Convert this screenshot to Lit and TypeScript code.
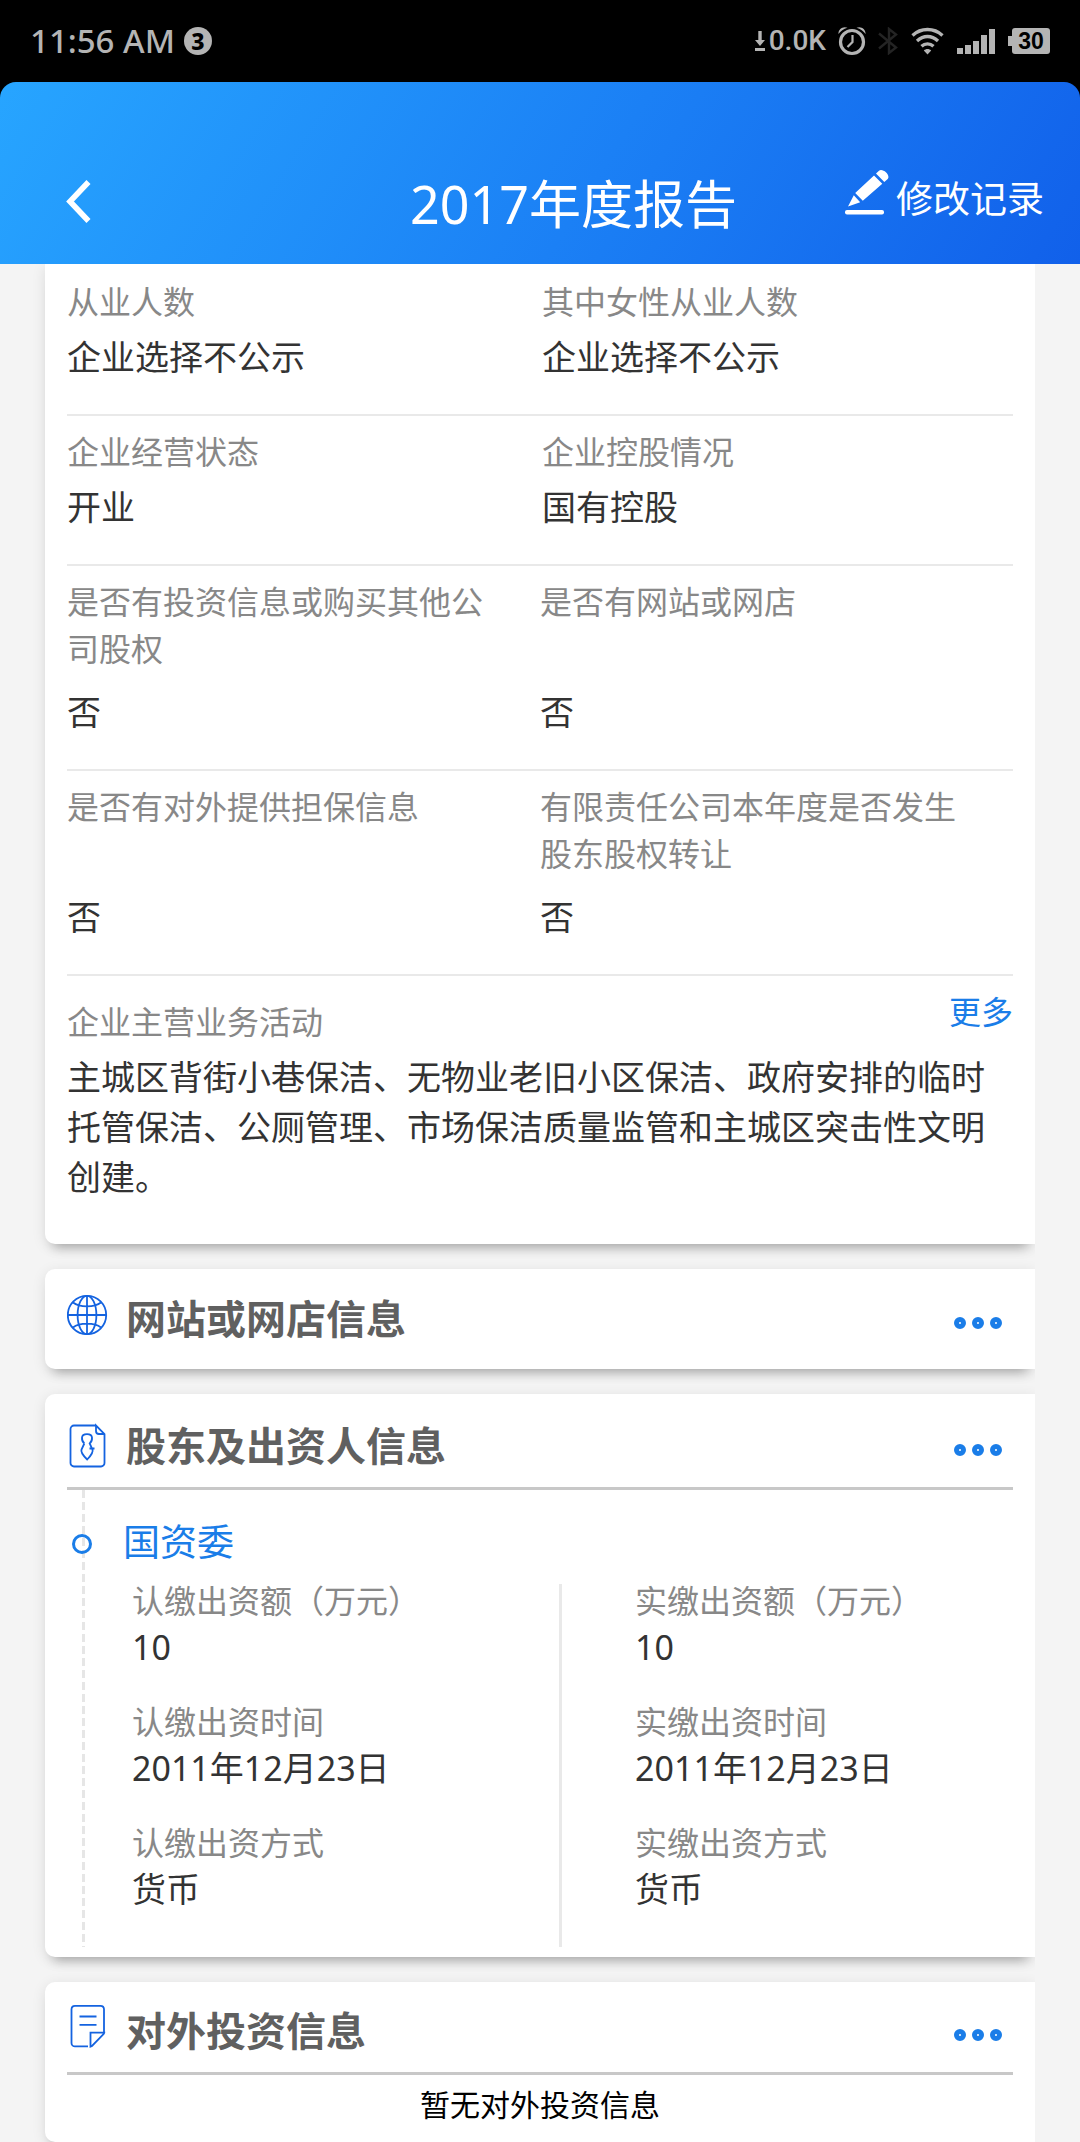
import { LitElement, html, css, svg, nothing, TemplateResult } from "lit";
import { customElement, property } from "lit/decorators.js";

interface Field {
  label: string;
  value: string;
}

const singleRows: Field[][] = [
  [
    { label: "从业人数", value: "企业选择不公示" },
    { label: "其中女性从业人数", value: "企业选择不公示" },
  ],
  [
    { label: "企业经营状态", value: "开业" },
    { label: "企业控股情况", value: "国有控股" },
  ],
];

const doubleRows: Field[][] = [
  [
    { label: "是否有投资信息或购买其他公司股权", value: "否" },
    { label: "是否有网站或网店", value: "否" },
  ],
  [
    { label: "是否有对外提供担保信息", value: "否" },
    { label: "有限责任公司本年度是否发生股东股权转让", value: "否" },
  ],
];

const subscribed: Field[] = [
  { label: "认缴出资额（万元）", value: "10" },
  { label: "认缴出资时间", value: "2011年12月23日" },
  { label: "认缴出资方式", value: "货币" },
];

const paidIn: Field[] = [
  { label: "实缴出资额（万元）", value: "10" },
  { label: "实缴出资时间", value: "2011年12月23日" },
  { label: "实缴出资方式", value: "货币" },
];

const icons: Record<string, TemplateResult> = {
  globe: svg`
    <circle cx="21" cy="22" r="19.200"/>
    <ellipse cx="21" cy="22" rx="9.400" ry="19.200"/>
    <path d="M21 2.800V41.200M1.800 22H40.200M7 9.500C13.500 14.600 28.500 14.600 35 9.500M7 34.500C13.500 29.400 28.500 29.400 35 34.500"/>`,
  holder: svg`
    <path d="M30 5.500H8A3.500 3.500 0 0 0 4.500 9V43A3.500 3.500 0 0 0 8 46.500H35A3.500 3.500 0 0 0 38.500 43V14L30 5.500V11A3 3 0 0 0 33 14H38.500"/>
    <path d="M18.300 23.500C16.200 21.500 15.800 19.500 16 17.500C16.300 12.900 25.700 12.900 26 17.500C26.200 19.500 25.800 21.500 23.700 23.500L26.500 29.500C27.500 32 26 34.500 21.200 39.500C16 34.500 14.500 32 15.500 29.500L18.300 23.500M23.500 28.500H28.500"/>`,
  note: svg`
    <path d="M22 41.400H9A3.500 3.500 0 0 1 5.500 37.900V4.300A3.500 3.500 0 0 1 9 0.900H34.500A3.500 3.500 0 0 1 38 4.300V27.700"/>
    <path d="M24.500 41.700V27.700H38.200Q38 28.700 37 29.700L26 41ZM13.500 11.500H30.500M13.500 19.800H30.500"/>`,
};

@customElement("status-bar")
export class StatusBar extends LitElement {
  static styles = css`
    :host {
      display: flex;
      align-items: center;
      height: 82px;
      padding: 0 30px;
      background: #000;
      color: #b4b4b4;
      font-family: "Noto Sans", Roboto, sans-serif;
    }
    .time {
      font-size: 33px;
      font-weight: 500;
      line-height: 40px;
    }
    .badge {
      width: 28px;
      height: 28px;
      margin-left: 9px;
      border-radius: 50%;
      background: #b4b4b4;
      color: #000;
      font-size: 23px;
      font-weight: 800;
      line-height: 28px;
      text-align: center;
    }
    .tray {
      display: flex;
      align-items: center;
      margin-left: auto;
    }
    .rate {
      margin: 0 12px 0 4px;
      font-family: Roboto, sans-serif;
      font-size: 28px;
      font-weight: 500;
      line-height: 32px;
    }
    .alarm { margin-right: 12px; }
    .bluetooth { margin-right: 13px; }
    .wifi { margin-right: 13px; }
    .signal { margin-right: 13px; }
    .battery {
      width: 38px;
      height: 26px;
      border-radius: 3px;
      background: #b4b4b4;
      color: #000;
      font-family: "Liberation Sans", sans-serif;
      font-size: 23px;
      font-weight: 700;
      line-height: 26px;
      text-align: center;
    }
    .tip {
      width: 4px;
      height: 10px;
      background: #b4b4b4;
    }
    svg { display: block; }
  `;

  render() {
    return html`
      <span class="time">11:56 AM</span>
      <span class="badge">3</span>
      <div class="tray">
        <svg width="10" height="20" viewBox="0 0 10 20" fill="#b4b4b4">
          <path d="M3.300 0H6.700V9H10L5 15L0 9H3.300ZM0 17H10V20H0Z" />
        </svg>
        <span class="rate">0.0K</span>
        <svg class="alarm" width="28" height="30" viewBox="0 0 28 30" fill="none" stroke="#b4b4b4">
          <circle cx="14" cy="16" r="11.500" stroke-width="3.200" />
          <path d="M14.500 9V16L9.500 21" stroke-width="2.200" />
          <path d="M0.500 8C0 3.500 5 -0.500 9.500 1.800C5.500 3 2.500 5 0.500 8ZM27.500 8C28 3.500 23 -0.500 18.500 1.800C22.500 3 25.500 5 27.500 8Z" fill="#b4b4b4" stroke="none" />
        </svg>
        <svg class="bluetooth" width="20" height="28" viewBox="0 0 20 28" fill="none" stroke="#242424" stroke-width="2.400">
          <path d="M1 6.500L18 20.500L11 26V2L18 7.500L1 21.500" />
        </svg>
        <svg class="wifi" width="33" height="28" viewBox="0 0 33 28" fill="none" stroke="#b4b4b4" stroke-width="3.300">
          <path d="M1.500 8.500C10 0.500 23 0.500 31.500 8.500M6 14C12.500 8 20.500 8 27 14M10.500 19.300C14 16 19 16 22.500 19.300" />
          <path d="M12.800 23.500C15 21.500 18 21.500 20.200 23.500L16.500 27.500Z" fill="#b4b4b4" stroke="none" />
        </svg>
        <svg class="signal" width="38" height="26" viewBox="0 0 38 26" fill="#b4b4b4">
          <path d="M0 20H6V26H0ZM8 17H14V26H8ZM16 13H22V26H16ZM24 7H30V26H24ZM32 1H38V26H32Z" />
        </svg>
        <span class="tip"></span>
        <span class="battery">30</span>
      </div>
    `;
  }
}

@customElement("page-header")
export class PageHeader extends LitElement {
  static styles = css`
    :host {
      display: block;
      background: #000;
    }
    .bar {
      display: flex;
      align-items: flex-end;
      height: 182px;
      box-sizing: border-box;
      padding: 0 36px 26px 65px;
      border-radius: 16px 16px 0 0;
      background: linear-gradient(122deg, #27a5ff 0%, #1b80f5 55%, #1160ea 100%);
      color: #fff;
    }
    .back {
      padding: 0;
      margin-bottom: 15px;
      border: 0;
      background: none;
    }
    .title {
      margin: 0 108px 0 auto;
      font-size: 52px;
      font-weight: 400;
      line-height: 68px;
      white-space: nowrap;
    }
    .edit {
      display: flex;
      align-items: flex-start;
      gap: 6px;
      margin-bottom: 15px;
      color: #fff;
      font-size: 37px;
      line-height: 48px;
      text-decoration: none;
      white-space: nowrap;
    }
    .pencil { margin-bottom: 8px; }
    .edit { align-items: flex-end; }
    svg { display: block; }
  `;

  render() {
    return html`
      <header class="bar">
        <button class="back" aria-label="返回">
          <svg width="26" height="44" viewBox="0 0 26 44" fill="none" stroke="#fff" stroke-width="5.600">
            <path d="M23.500 3L5 22.500L23.500 42" />
          </svg>
        </button>
        <h1 class="title">2017年度报告</h1>
        <a class="edit" href="#history">
          <svg class="pencil" width="45" height="46" viewBox="0 0 45 46" fill="#fff">
            <path d="M3 37.500L8.800 26.300L15.200 33.200ZM10.200 24L29 6.500L37.300 14.700L17.800 31.800ZM31 4.500L34 1.700C37.500 -1.200 46 6 42.700 10L39.300 13Z" />
            <rect x="0" y="41" width="39" height="4.400" rx="2" />
          </svg>
          修改记录
        </a>
      </header>
    `;
  }
}

@customElement("card-header")
export class CardHeader extends LitElement {
  @property() icon = "globe";
  @property() heading = "";

  static styles = css`
    :host {
      display: flex;
      align-items: center;
      height: 82px;
      padding-top: 6px;
    }
    .icon {
      display: block;
      flex: none;
      margin-right: 15px;
    }
    .heading {
      margin: 0;
      color: #606060;
      font-size: 40px;
      font-weight: 700;
      line-height: 52px;
    }
    .more {
      display: flex;
      gap: 6px;
      margin: 8px 11px 0 auto;
      padding: 0;
      border: 0;
      background: none;
    }
    .dot {
      box-sizing: border-box;
      width: 12px;
      height: 12px;
      border: 5px solid #1a7de8;
      border-radius: 50%;
    }
  `;

  render() {
    return html`
      <svg class="icon" width="44" height="52" viewBox="1 0 44 52" fill="none" stroke="#1463e0" stroke-width="1.800">
        ${icons[this.icon] ?? nothing}
      </svg>
      <h2 class="heading">${this.heading}</h2>
      <button class="more" aria-label="更多">
        <span class="dot"></span><span class="dot"></span><span class="dot"></span>
      </button>
    `;
  }
}

@customElement("app-root")
export class AppRoot extends LitElement {
  static styles = css`
    :host {
      display: flex;
      flex-direction: column;
      min-height: 100vh;
      background: #f4f4f4;
      color: #333;
      font-family: "Noto Sans", "Noto Sans CJK SC", sans-serif;
    }
    .content {
      display: flex;
      flex: 1;
      flex-direction: column;
      gap: 25px;
      margin-right: 45px;
      padding-left: 45px;
      overflow: hidden;
    }
    .card {
      padding: 2px 22px 0;
      border-radius: 10px 0 0 10px;
      background: #fff;
      box-shadow: 0 12px 12px -9px rgba(0, 0, 0, 0.28), 0 3px 14px rgba(0, 0, 0, 0.1);
    }
    .basic {
      padding-bottom: 42px;
      border-radius: 0 0 0 10px;
    }
    .collapsed {
      padding-top: 3px;
      padding-bottom: 9px;
    }
    .holders {
      padding-top: 5px;
      padding-bottom: 10px;
    }
    dl, dd, p { margin: 0; }
    .row {
      display: grid;
      grid-template-columns: 1fr 1fr;
      column-gap: 4px;
      padding: 12px 0 32px;
      border-bottom: 2px solid #e9e9e9;
    }
    .field {
      display: flex;
      flex-direction: column;
      gap: 7px;
      padding-right: 32px;
    }
    .tall { column-gap: 0; }
    .tall .field {
      justify-content: space-between;
      gap: 15px;
    }
    .label {
      color: #888;
      font-size: 32px;
      line-height: 47px;
    }
    .value {
      font-size: 34px;
      line-height: 50px;
    }
    .activity {
      display: grid;
      grid-template-columns: 1fr auto;
      padding-top: 12px;
    }
    .activity .label { padding-top: 10px; }
    .activity .value {
      grid-column: 1 / 3;
      margin-top: 7px;
    }
    .link {
      color: #1a7de8;
      font-size: 32px;
      line-height: 47px;
      text-decoration: none;
    }
    .ruled { border-bottom: 3px solid #c8c8c8; }
    .timeline {
      position: relative;
      padding: 26px 0 0 56px;
    }
    .timeline::before {
      content: "";
      position: absolute;
      top: 0;
      bottom: 0;
      left: 15px;
      width: 3px;
      background: repeating-linear-gradient(#e6e6e6 0 8px, transparent 8px 12px);
    }
    .marker {
      position: absolute;
      top: 44px;
      left: 5px;
      box-sizing: border-box;
      width: 20px;
      height: 20px;
      border: 3px solid #1a7de8;
      border-radius: 50%;
    }
    .holder {
      margin: 0;
      color: #1a7de8;
      font-size: 37px;
      font-weight: 400;
      line-height: 52px;
    }
    .columns {
      display: grid;
      grid-template-columns: 49fr 51fr;
      margin-top: 16px;
    }
    .column {
      display: flex;
      flex-direction: column;
      gap: 29px;
      padding: 0 0 35px 9px;
      margin-top: -6px;
    }
    .second { padding-left: 73px; }
    .divider {
      border-left: 3px solid #e9e9e9;
    }
    .column .label, .column .value { line-height: 46px; }
    .empty {
      padding: 8px 0 15px;
      color: #000;
      font-size: 30px;
      line-height: 44px;
      text-align: center;
    }
  `;

  private row(fields: Field[], kind = "") {
    return html`<dl class="row ${kind}">
      ${fields.map((f) => html`<div class="field">
        <dt class="label">${f.label}</dt>
        <dd class="value">${f.value}</dd>
      </div>`)}
    </dl>`;
  }

  private column(fields: Field[], kind = "") {
    return html`<dl class="column ${kind}">
      ${fields.map((f) => html`<div>
        <dt class="label">${f.label}</dt>
        <dd class="value">${f.value}</dd>
      </div>`)}
    </dl>`;
  }

  render() {
    return html`
      <status-bar></status-bar>
      <page-header></page-header>
      <main class="content">
        <section class="card basic">
          ${singleRows.map((r) => this.row(r))}
          ${doubleRows.map((r) => this.row(r, "tall"))}
          <div class="activity">
            <span class="label">企业主营业务活动</span>
            <a class="link" href="#activity">更多</a>
            <p class="value">主城区背街小巷保洁、无物业老旧小区保洁、政府安排的临时托管保洁、公厕管理、市场保洁质量监管和主城区突击性文明创建。</p>
          </div>
        </section>
        <section class="card collapsed">
          <card-header icon="globe" heading="网站或网店信息"></card-header>
        </section>
        <section class="card holders">
          <card-header class="ruled" icon="holder" heading="股东及出资人信息"></card-header>
          <div class="timeline">
            <span class="marker"></span>
            <h3 class="holder">国资委</h3>
            <div class="columns">
              ${this.column(subscribed)}
              <div class="divider">${this.column(paidIn, "second")}</div>
            </div>
          </div>
        </section>
        <section class="card">
          <card-header class="ruled" icon="note" heading="对外投资信息"></card-header>
          <p class="empty">暂无对外投资信息</p>
        </section>
      </main>
    `;
  }
}
